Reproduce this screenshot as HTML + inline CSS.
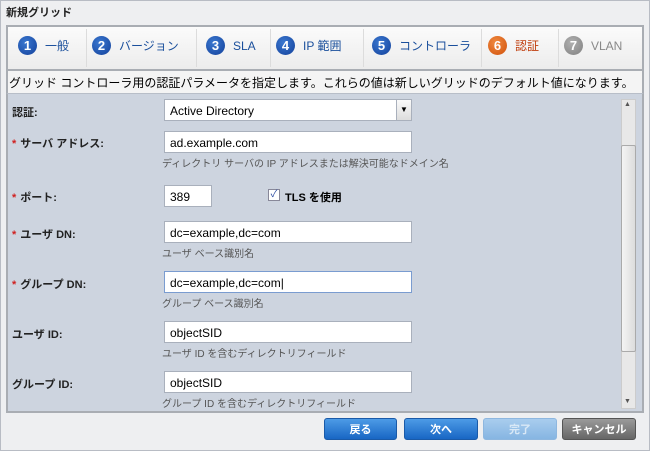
<!DOCTYPE html><html><head><meta charset="utf-8"><style>
*{margin:0;padding:0;box-sizing:border-box}
body{width:650px;height:451px;overflow:hidden;background:#f0f0f0;font-family:"Liberation Sans","Noto Sans CJK JP",sans-serif;font-size:12px;color:#000;position:relative}
.a{position:absolute}
.outer{left:0;top:0;width:650px;height:451px;border:1px solid #b8bcc4;background:#eeeff1}
.title{left:6px;top:4px;font-size:11px;font-weight:bold;color:#222}
.tabs{left:6px;top:25px;width:638px;height:46px;border:2px solid #a9adb3;background:linear-gradient(#fbfbfb,#ececec)}
.tab{position:absolute;top:9px;font-size:12px;color:#1a4f9c;display:flex;align-items:center;gap:8px}
.num{width:19px;height:19px;border-radius:50%;background:radial-gradient(circle at 40% 35%,#3b78d0,#12409a);color:#fff;font-weight:bold;font-size:13px;display:flex;align-items:center;justify-content:center}
.sep{position:absolute;top:2px;width:1px;height:38px;background:#dcdcdc}
.desc{left:6px;top:71px;width:638px;height:22px;border-left:2px solid #a9adb3;border-right:2px solid #a9adb3;background:#f4f4f4;font-size:12px;padding:3px 0 0 1px;white-space:nowrap}
.form{left:6px;top:93px;width:638px;height:320px;background:#cdd4df;border:2px solid #a9adb3;border-top:1px solid #b8bec8}
.lbl{position:absolute;left:12px;font-size:11px;font-weight:bold;color:#222}
.lbl b{color:#d02020;margin-right:4px}
.inp{position:absolute;background:#fff;border:1px solid #a9b0bc;font-size:12px;padding:4px 0 0 5px;height:22px}
.hint{position:absolute;left:162px;font-size:10px;color:#555}
.sb{left:621px;top:99px;width:15px;height:310px;background:#e8e8e8;border:1px solid #ccc}
.thumb{left:621px;top:145px;width:15px;height:207px;background:linear-gradient(90deg,#f4f4f4,#dcdcdc);border:1px solid #aaa;border-radius:2px}
.btn{position:absolute;top:418px;height:22px;border-radius:3px;color:#fff;font-weight:bold;font-size:11px;text-align:center;line-height:22px}
.blue{background:linear-gradient(#4d9be6,#1866c4);border:1px solid #1a5aa8}
.dis{background:linear-gradient(#a9cdee,#86b5e2);color:#d8e8f6;border:1px solid #8eb7df}
.gray{background:linear-gradient(#9a9a9a,#666);border:1px solid #555}
</style></head><body>
<div class="a outer"></div>
<div class="a title">新規グリッド</div>
<div class="a tabs">
<div class="tab" style="left:10px"><span class="num">1</span>一般</div>
<div class="sep" style="left:78px"></div>
<div class="tab" style="left:84px"><span class="num">2</span>バージョン</div>
<div class="sep" style="left:188px"></div>
<div class="tab" style="left:198px"><span class="num">3</span>SLA</div>
<div class="sep" style="left:262px"></div>
<div class="tab" style="left:268px"><span class="num">4</span>IP 範囲</div>
<div class="sep" style="left:355px"></div>
<div class="tab" style="left:364px"><span class="num">5</span>コントローラ</div>
<div class="sep" style="left:473px"></div>
<div class="tab" style="left:480px;color:#c04010"><span class="num" style="background:radial-gradient(circle at 40% 35%,#f08a40,#d0500a)">6</span>認証</div>
<div class="sep" style="left:550px"></div>
<div class="tab" style="left:556px;color:#888"><span class="num" style="background:radial-gradient(circle at 40% 35%,#b0b0b0,#808080)">7</span>VLAN</div>
</div>
<div class="a desc">グリッド コントローラ用の認証パラメータを指定します。これらの値は新しいグリッドのデフォルト値になります。</div>
<div class="a form"></div>
<div class="lbl" style="top:104px">認証:</div>
<div class="inp" style="left:164px;top:99px;width:233px">Active Directory</div>
<div class="a" style="left:396px;top:99px;width:16px;height:22px;background:linear-gradient(#fafafa,#ddd);border:1px solid #a9b0bc;font-size:8px;text-align:center;line-height:20px">▼</div>
<div class="lbl" style="top:135px"><b>*</b>サーバ アドレス:</div>
<div class="inp" style="left:164px;top:131px;width:248px">ad.example.com</div>
<div class="hint" style="top:155px">ディレクトリ サーバの IP アドレスまたは解決可能なドメイン名</div>
<div class="lbl" style="top:189px"><b>*</b>ポート:</div>
<div class="inp" style="left:164px;top:185px;width:48px">389</div>
<div class="a" style="left:268px;top:189px;width:12px;height:12px;background:#fff;border:1px solid #889;font-size:10px;line-height:10px;color:#2a4aa0;text-align:center">✓</div>
<div class="a" style="left:285px;top:189px;font-size:11px;font-weight:bold">TLS を使用</div>
<div class="lbl" style="top:226px"><b>*</b>ユーザ DN:</div>
<div class="inp" style="left:164px;top:221px;width:248px">dc=example,dc=com</div>
<div class="hint" style="top:245px">ユーザ ベース識別名</div>
<div class="lbl" style="top:276px"><b>*</b>グループ DN:</div>
<div class="inp" style="left:164px;top:271px;width:248px;border-color:#7a9cd0">dc=example,dc=com|</div>
<div class="hint" style="top:295px">グループ ベース識別名</div>
<div class="lbl" style="top:326px">ユーザ ID:</div>
<div class="inp" style="left:164px;top:321px;width:248px">objectSID</div>
<div class="hint" style="top:345px">ユーザ ID を含むディレクトリフィールド</div>
<div class="lbl" style="top:376px">グループ ID:</div>
<div class="inp" style="left:164px;top:371px;width:248px">objectSID</div>
<div class="hint" style="top:395px">グループ ID を含むディレクトリフィールド</div>
<div class="a sb"></div>
<div class="a thumb"></div>
<div class="a" style="left:624px;top:101px;font-size:7px;color:#555">▲</div>
<div class="a" style="left:624px;top:398px;font-size:7px;color:#555">▼</div>
<div class="btn blue" style="left:324px;width:73px">戻る</div>
<div class="btn blue" style="left:404px;width:74px">次へ</div>
<div class="btn dis" style="left:483px;width:74px">完了</div>
<div class="btn gray" style="left:562px;width:74px">キャンセル</div>
</body></html>
